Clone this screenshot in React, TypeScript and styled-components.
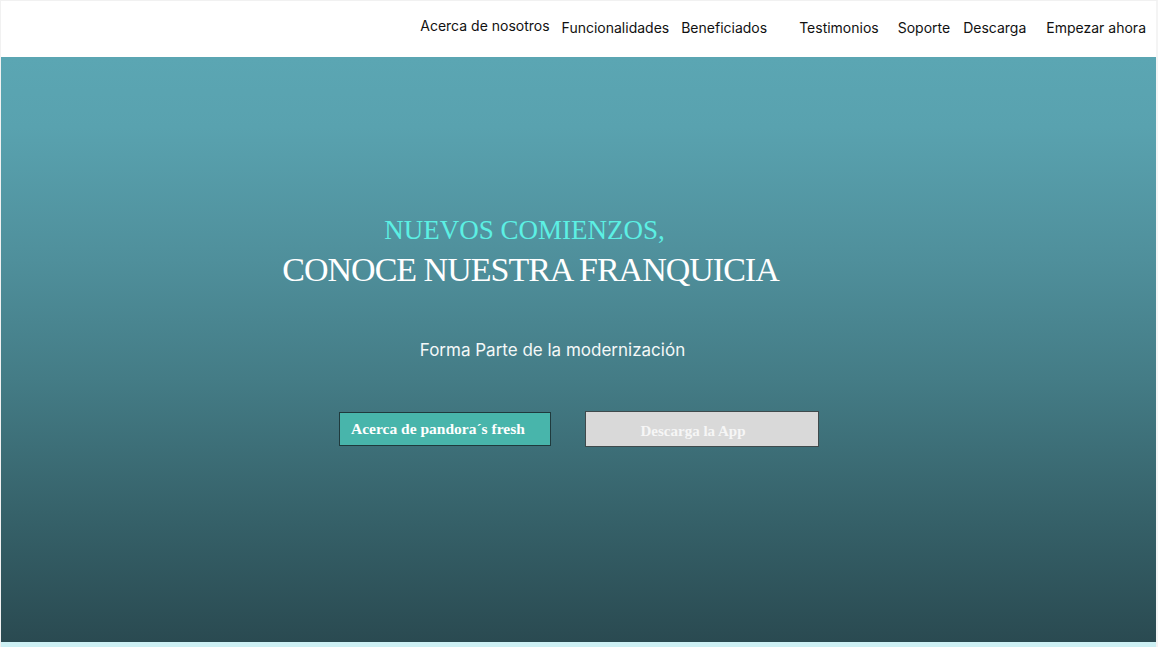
import React from "react";
import styled, { createGlobalStyle } from "styled-components";

const Global = createGlobalStyle`
  html, body { margin: 0; padding: 0; background: #ffffff; }
  body { font-family: "Inter", "Liberation Sans", sans-serif; }
`;

const Frame = styled.div`
  width: 1158px;
  height: 647px;
  box-sizing: border-box;
  border-top: 1px solid #f1f1f1;
  border-left: 1px solid #f1f1f1;
  border-right: 2px solid #f4f4f4;
  display: flex;
  flex-direction: column;
  overflow: hidden;
  background: #ffffff;
`;

const Header = styled.header`
  height: 56px;
  box-sizing: border-box;
  flex: none;
  display: flex;
  align-items: center;
  justify-content: flex-end;
  padding: 0 10px 4px 0;
  background: #ffffff;
`;

const NavLink = styled.a<{ $ml: number; $dy?: number }>`
  margin-left: ${(p) => p.$ml}px;
  position: relative;
  top: ${(p) => p.$dy ?? 0}px;
  font-family: "Inter", "Liberation Sans", sans-serif;
  font-size: 14px;
  color: #111111;
  text-decoration: none;
  white-space: nowrap;
`;

const Hero = styled.section`
  flex: 1;
  display: flex;
  flex-direction: column;
  background: linear-gradient(
    180deg,
    #5ba6b3 0%,
    #59a2af 12%,
    #4f8f9b 35%,
    #447c86 55%,
    #36626a 78%,
    #2a4a51 100%
  );
  padding-top: 158px;
`;

const Eyebrow = styled.h2`
  margin: 0;
  padding-right: 108px;
  text-align: center;
  font-family: "Liberation Serif", "Times New Roman", serif;
  font-weight: 400;
  font-size: 27px;
  line-height: 30px;
  color: #5cf0e4;
`;

const Title = styled.h1`
  margin: 5px 0 0;
  padding-right: 96px;
  text-align: center;
  font-family: "Liberation Serif", "Times New Roman", serif;
  font-weight: 400;
  font-size: 34px;
  letter-spacing: -1px;
  line-height: 40px;
  color: #ffffff;
`;

const Subtitle = styled.p`
  margin: 49px 0 0;
  padding-right: 52px;
  text-align: center;
  font-family: "Inter", "Liberation Sans", sans-serif;
  font-size: 17px;
  line-height: 22px;
  color: #f4f8f8;
`;

const Actions = styled.div`
  display: flex;
  align-items: center;
  margin-top: 50px;
  padding-left: 338px;
  gap: 34px;
`;

const Button = styled.button<{ $variant: "teal" | "gray" }>`
  box-sizing: border-box;
  display: flex;
  align-items: center;
  font-family: "Liberation Serif", "Times New Roman", serif;
  font-weight: 700;
  color: #ffffff;
  cursor: pointer;
  ${(p) =>
    p.$variant === "teal"
      ? `
    width: 212px;
    height: 34px;
    font-size: 15.5px;
    background: #48b5ab;
    border: 1px solid #1f3a3d;
    justify-content: flex-start;
    padding: 0 0 1px 11px;
  `
      : `
    width: 234px;
    height: 36px;
    font-size: 15px;
    background: #d9d9d9;
    border: 1px solid #3f4a4c;
    justify-content: center;
    padding: 4px 18px 0 0;
    color: #f6f6f6;
  `}
`;

const Strip = styled.div`
  height: 5px;
  flex: none;
  background: #cdf0f4;
`;

const links: { label: string; ml: number; dy?: number }[] = [
  { label: "Acerca de nosotros", ml: 0, dy: -2 },
  { label: "Funcionalidades", ml: 12 },
  { label: "Beneficiados", ml: 12 },
  { label: "Testimonios", ml: 32 },
  { label: "Soporte", ml: 19 },
  { label: "Descarga", ml: 13 },
  { label: "Empezar ahora", ml: 20 },
];

export default function App() {
  return (
    <>
      <Global />
      <Frame>
        <Header>
          {links.map((l) => (
            <NavLink key={l.label} href="#" $ml={l.ml} $dy={l.dy}>
              {l.label}
            </NavLink>
          ))}
        </Header>
        <Hero>
          <Eyebrow>NUEVOS COMIENZOS,</Eyebrow>
          <Title>CONOCE NUESTRA FRANQUICIA</Title>
          <Subtitle>Forma Parte de la modernización</Subtitle>
          <Actions>
            <Button $variant="teal">Acerca de pandora´s fresh</Button>
            <Button $variant="gray">Descarga la App</Button>
          </Actions>
        </Hero>
        <Strip />
      </Frame>
    </>
  );
}
